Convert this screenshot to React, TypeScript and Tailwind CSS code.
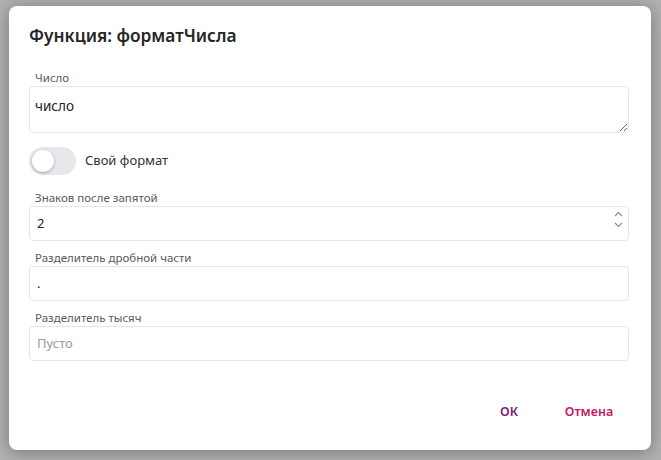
import React from "react";

const font = { fontFamily: '"Noto Sans", "Open Sans", Arial, sans-serif' };

function Label({ children }: { children: React.ReactNode }) {
  return <div className="h-4 pl-[6px] text-[11.5px] leading-4 text-[#5a5a5a]">{children}</div>;
}

function Field({ value, placeholder, spinner }: { value?: string; placeholder?: string; spinner?: boolean }) {
  return (
    <div className="relative flex h-[35px] items-center rounded border border-[#e6e6e6] bg-white pl-[7px] text-[13px] text-[#222]">
      {value ? <span>{value}</span> : <span className="text-[#9a9a9a]">{placeholder}</span>}
      {spinner && (
        <div className="absolute right-[5px] top-[4px] flex flex-col items-center gap-[5px] text-[#8a8a8a]">
          <svg width="9" height="6" viewBox="0 0 9 6" fill="none" stroke="currentColor" strokeWidth="1.1">
            <path d="M1 5 L4.5 1.5 L8 5" />
          </svg>
          <svg width="9" height="6" viewBox="0 0 9 6" fill="none" stroke="currentColor" strokeWidth="1.1">
            <path d="M1 1 L4.5 4.5 L8 1" />
          </svg>
        </div>
      )}
    </div>
  );
}

export default function App() {
  return (
    <div className="h-[460px] w-[661px] bg-[#b2b2b2] pl-[9px] pt-[6px]" style={font}>
      <div className="flex h-[444px] w-[642px] flex-col rounded-lg bg-white pl-5 pr-[22px] pt-[18px] shadow-[0_2px_18px_rgba(0,0,0,0.35)]">
        {/* Title */}
        <h2 className="h-6 text-[17.3px] font-semibold leading-6 text-[#262626]">Функция: форматЧисла</h2>

        {/* Число */}
        <div className="mt-[22px]">
          <Label>Число</Label>
          <textarea
            defaultValue="число"
            className="block h-[47px] w-full resize-y rounded border border-[#e6e6e6] bg-white px-[5px] pt-[9px] text-[13.5px] leading-5 text-[#222] outline-none"
          />
        </div>

        {/* Toggle */}
        <div className="mt-[13px] flex h-[30px] items-center">
          <div className="relative h-[28px] w-[47px] rounded-full bg-[#e8e8ec]">
            <div className="absolute left-[3px] top-[3px] h-[22px] w-[22px] rounded-full bg-white shadow-[0_1px_3px_rgba(0,0,0,0.3)]" />
          </div>
          <span className="ml-[9px] text-[13px] text-[#333]">Свой формат</span>
        </div>

        {/* Знаков */}
        <div className="mt-[14px]">
          <Label>Знаков после запятой</Label>
          <Field value="2" spinner />
        </div>

        <div className="mt-[9px]">
          <Label>Разделитель дробной части</Label>
          <Field value="." />
        </div>

        <div className="mt-[9px]">
          <Label>Разделитель тысяч</Label>
          <Field placeholder="Пусто" />
        </div>

        {/* Buttons */}
        <div className="mt-[35px] flex justify-end gap-[15px]">
          <button className="h-8 w-[50px] text-[12.5px] font-semibold text-[#7d1a7c]">ОК</button>
          <button className="h-8 w-[80px] text-[12.5px] font-semibold text-[#c2185f]">Отмена</button>
        </div>
      </div>
    </div>
  );
}
